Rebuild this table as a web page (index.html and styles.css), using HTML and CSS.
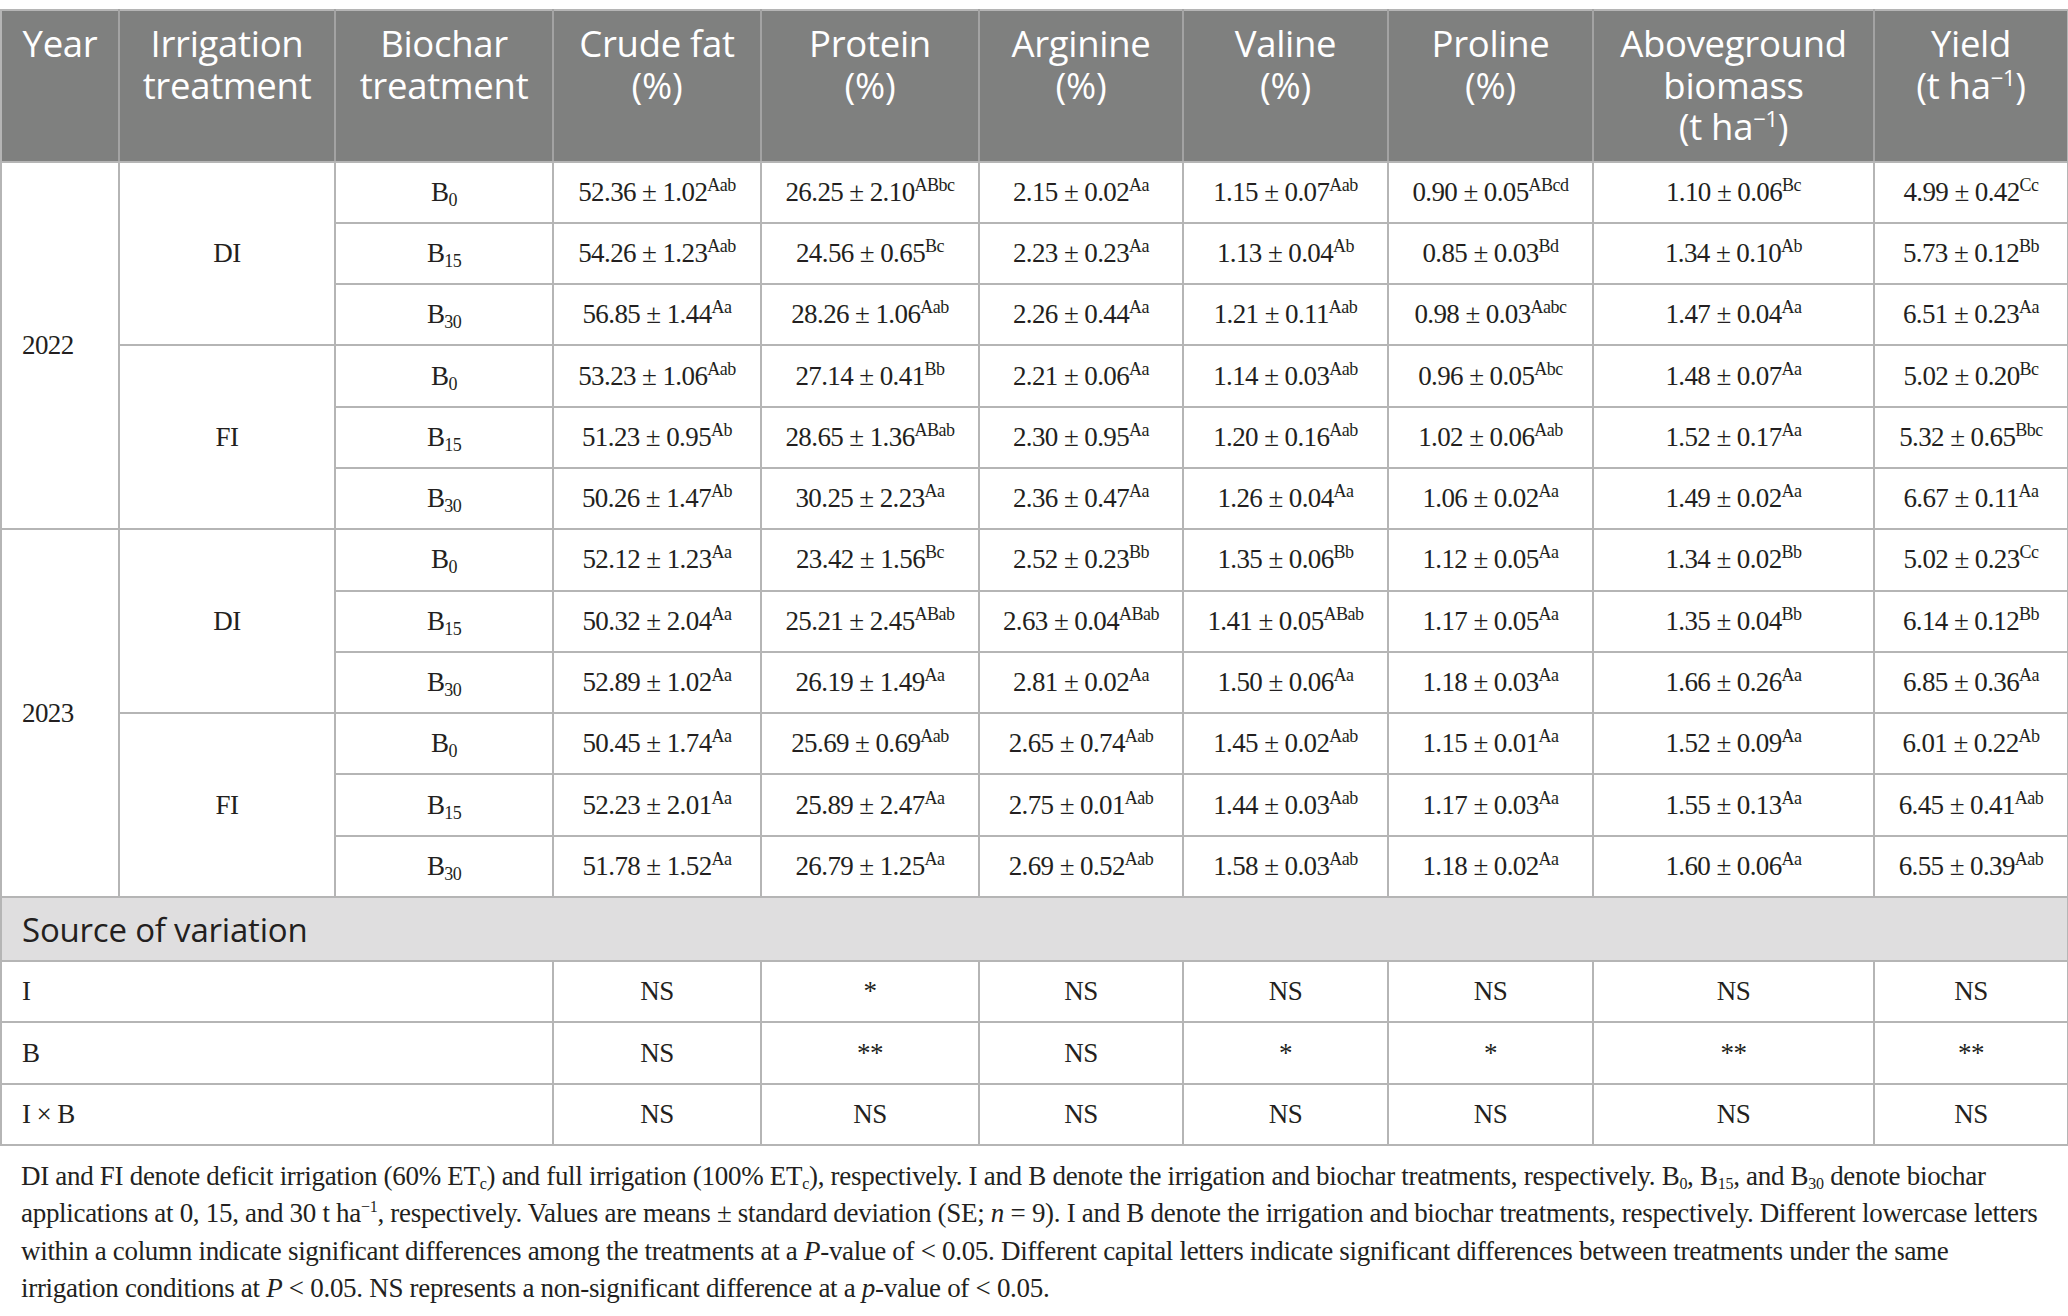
FILE: index.html
```html
<!DOCTYPE html>
<html lang="en">

<head>
    <meta charset="UTF-8" />
    <meta name="viewport" content="width=device-width, initial-scale=1.0" />
    <title>Biochar and irrigation table</title>
    <link rel="stylesheet" href="styles.css">
</head>

<body>
    <div class="page">
        <table class="data">
            <colgroup>
                <col class="c-year">
                <col class="c-irr">
                <col class="c-bio">
                <col class="c-fat">
                <col class="c-pro">
                <col class="c-arg">
                <col class="c-val">
                <col class="c-prl">
                <col class="c-abv">
                <col class="c-yld">
            </colgroup>
            <thead>
                <tr>
                    <th>Year</th>
                    <th>Irrigation<br>treatment</th>
                    <th>Biochar<br>treatment</th>
                    <th>Crude fat<br>(%)</th>
                    <th>Protein<br>(%)</th>
                    <th>Arginine<br>(%)</th>
                    <th>Valine<br>(%)</th>
                    <th>Proline<br>(%)</th>
                    <th>Aboveground<br>biomass<br>(t ha<sup>−1</sup>)</th>
                    <th>Yield<br>(t ha<sup>−1</sup>)</th>
                </tr>
            </thead>
            <tbody>
                <!-- 2022 -->
                <tr>
                    <td class="year" rowspan="6">2022</td>
                    <td rowspan="3">DI</td>
                    <td>B<sub>0</sub></td>
                    <td>52.36 ± 1.02<sup>Aab</sup></td>
                    <td>26.25 ± 2.10<sup>ABbc</sup></td>
                    <td>2.15 ± 0.02<sup>Aa</sup></td>
                    <td>1.15 ± 0.07<sup>Aab</sup></td>
                    <td>0.90 ± 0.05<sup>ABcd</sup></td>
                    <td>1.10 ± 0.06<sup>Bc</sup></td>
                    <td>4.99 ± 0.42<sup>Cc</sup></td>
                </tr>
                <tr>
                    <td>B<sub>15</sub></td>
                    <td>54.26 ± 1.23<sup>Aab</sup></td>
                    <td>24.56 ± 0.65<sup>Bc</sup></td>
                    <td>2.23 ± 0.23<sup>Aa</sup></td>
                    <td>1.13 ± 0.04<sup>Ab</sup></td>
                    <td>0.85 ± 0.03<sup>Bd</sup></td>
                    <td>1.34 ± 0.10<sup>Ab</sup></td>
                    <td>5.73 ± 0.12<sup>Bb</sup></td>
                </tr>
                <tr>
                    <td>B<sub>30</sub></td>
                    <td>56.85 ± 1.44<sup>Aa</sup></td>
                    <td>28.26 ± 1.06<sup>Aab</sup></td>
                    <td>2.26 ± 0.44<sup>Aa</sup></td>
                    <td>1.21 ± 0.11<sup>Aab</sup></td>
                    <td>0.98 ± 0.03<sup>Aabc</sup></td>
                    <td>1.47 ± 0.04<sup>Aa</sup></td>
                    <td>6.51 ± 0.23<sup>Aa</sup></td>
                </tr>
                <tr>
                    <td rowspan="3">FI</td>
                    <td>B<sub>0</sub></td>
                    <td>53.23 ± 1.06<sup>Aab</sup></td>
                    <td>27.14 ± 0.41<sup>Bb</sup></td>
                    <td>2.21 ± 0.06<sup>Aa</sup></td>
                    <td>1.14 ± 0.03<sup>Aab</sup></td>
                    <td>0.96 ± 0.05<sup>Abc</sup></td>
                    <td>1.48 ± 0.07<sup>Aa</sup></td>
                    <td>5.02 ± 0.20<sup>Bc</sup></td>
                </tr>
                <tr>
                    <td>B<sub>15</sub></td>
                    <td>51.23 ± 0.95<sup>Ab</sup></td>
                    <td>28.65 ± 1.36<sup>ABab</sup></td>
                    <td>2.30 ± 0.95<sup>Aa</sup></td>
                    <td>1.20 ± 0.16<sup>Aab</sup></td>
                    <td>1.02 ± 0.06<sup>Aab</sup></td>
                    <td>1.52 ± 0.17<sup>Aa</sup></td>
                    <td>5.32 ± 0.65<sup>Bbc</sup></td>
                </tr>
                <tr>
                    <td>B<sub>30</sub></td>
                    <td>50.26 ± 1.47<sup>Ab</sup></td>
                    <td>30.25 ± 2.23<sup>Aa</sup></td>
                    <td>2.36 ± 0.47<sup>Aa</sup></td>
                    <td>1.26 ± 0.04<sup>Aa</sup></td>
                    <td>1.06 ± 0.02<sup>Aa</sup></td>
                    <td>1.49 ± 0.02<sup>Aa</sup></td>
                    <td>6.67 ± 0.11<sup>Aa</sup></td>
                </tr>

                <!-- 2023 -->
                <tr>
                    <td class="year" rowspan="6">2023</td>
                    <td rowspan="3">DI</td>
                    <td>B<sub>0</sub></td>
                    <td>52.12 ± 1.23<sup>Aa</sup></td>
                    <td>23.42 ± 1.56<sup>Bc</sup></td>
                    <td>2.52 ± 0.23<sup>Bb</sup></td>
                    <td>1.35 ± 0.06<sup>Bb</sup></td>
                    <td>1.12 ± 0.05<sup>Aa</sup></td>
                    <td>1.34 ± 0.02<sup>Bb</sup></td>
                    <td>5.02 ± 0.23<sup>Cc</sup></td>
                </tr>
                <tr>
                    <td>B<sub>15</sub></td>
                    <td>50.32 ± 2.04<sup>Aa</sup></td>
                    <td>25.21 ± 2.45<sup>ABab</sup></td>
                    <td>2.63 ± 0.04<sup>ABab</sup></td>
                    <td>1.41 ± 0.05<sup>ABab</sup></td>
                    <td>1.17 ± 0.05<sup>Aa</sup></td>
                    <td>1.35 ± 0.04<sup>Bb</sup></td>
                    <td>6.14 ± 0.12<sup>Bb</sup></td>
                </tr>
                <tr>
                    <td>B<sub>30</sub></td>
                    <td>52.89 ± 1.02<sup>Aa</sup></td>
                    <td>26.19 ± 1.49<sup>Aa</sup></td>
                    <td>2.81 ± 0.02<sup>Aa</sup></td>
                    <td>1.50 ± 0.06<sup>Aa</sup></td>
                    <td>1.18 ± 0.03<sup>Aa</sup></td>
                    <td>1.66 ± 0.26<sup>Aa</sup></td>
                    <td>6.85 ± 0.36<sup>Aa</sup></td>
                </tr>
                <tr>
                    <td rowspan="3">FI</td>
                    <td>B<sub>0</sub></td>
                    <td>50.45 ± 1.74<sup>Aa</sup></td>
                    <td>25.69 ± 0.69<sup>Aab</sup></td>
                    <td>2.65 ± 0.74<sup>Aab</sup></td>
                    <td>1.45 ± 0.02<sup>Aab</sup></td>
                    <td>1.15 ± 0.01<sup>Aa</sup></td>
                    <td>1.52 ± 0.09<sup>Aa</sup></td>
                    <td>6.01 ± 0.22<sup>Ab</sup></td>
                </tr>
                <tr>
                    <td>B<sub>15</sub></td>
                    <td>52.23 ± 2.01<sup>Aa</sup></td>
                    <td>25.89 ± 2.47<sup>Aa</sup></td>
                    <td>2.75 ± 0.01<sup>Aab</sup></td>
                    <td>1.44 ± 0.03<sup>Aab</sup></td>
                    <td>1.17 ± 0.03<sup>Aa</sup></td>
                    <td>1.55 ± 0.13<sup>Aa</sup></td>
                    <td>6.45 ± 0.41<sup>Aab</sup></td>
                </tr>
                <tr>
                    <td>B<sub>30</sub></td>
                    <td>51.78 ± 1.52<sup>Aa</sup></td>
                    <td>26.79 ± 1.25<sup>Aa</sup></td>
                    <td>2.69 ± 0.52<sup>Aab</sup></td>
                    <td>1.58 ± 0.03<sup>Aab</sup></td>
                    <td>1.18 ± 0.02<sup>Aa</sup></td>
                    <td>1.60 ± 0.06<sup>Aa</sup></td>
                    <td>6.55 ± 0.39<sup>Aab</sup></td>
                </tr>

                <!-- Source of variation -->
                <tr class="section">
                    <td colspan="10">Source of variation</td>
                </tr>
                <tr>
                    <td class="factor" colspan="3">I</td>
                    <td>NS</td>
                    <td>*</td>
                    <td>NS</td>
                    <td>NS</td>
                    <td>NS</td>
                    <td>NS</td>
                    <td>NS</td>
                </tr>
                <tr>
                    <td class="factor" colspan="3">B</td>
                    <td>NS</td>
                    <td>**</td>
                    <td>NS</td>
                    <td>*</td>
                    <td>*</td>
                    <td>**</td>
                    <td>**</td>
                </tr>
                <tr>
                    <td class="factor" colspan="3">I × B</td>
                    <td>NS</td>
                    <td>NS</td>
                    <td>NS</td>
                    <td>NS</td>
                    <td>NS</td>
                    <td>NS</td>
                    <td>NS</td>
                </tr>
            </tbody>
        </table>

        <!-- Footnote -->
        <p class="note">DI and FI denote deficit irrigation (60% ET<sub>c</sub>) and full irrigation (100% ET<sub>c</sub>), respectively. I and B denote the irrigation and biochar treatments, respectively. B<sub>0</sub>, B<sub>15</sub>, and B<sub>30</sub> denote biochar applications at 0, 15, and 30 t ha<sup>−1</sup>, respectively. Values are means ± standard deviation (SE; <i>n</i> = 9). I and B denote the irrigation and biochar treatments, respectively. Different lowercase letters within a column indicate significant differences among the treatments at a <i>P</i>-value of &lt; 0.05. Different capital letters indicate significant differences between treatments under the same irrigation conditions at <i>P</i> &lt; 0.05. NS represents a non-significant difference at a <i>p</i>-value of &lt; 0.05.</p>
    </div>
</body>

</html>
```

FILE: styles.css
```css
* {
    margin: 0;
    padding: 0;
    box-sizing: border-box;
}

body {
    font-family: "Liberation Serif", "Times New Roman", serif;
    background: #fff;
    color: #231f20;
}

.page {
    width: 2068px;
    padding-top: 9px;
}

/* Table */
.data {
    width: 2067px;
    table-layout: fixed;
    border-collapse: collapse;
    border: 2px solid #b5b5b5;
}

.c-year { width: 118px; }
.c-irr { width: 216px; }
.c-bio { width: 218px; }
.c-fat { width: 208px; }
.c-pro { width: 218px; }
.c-arg { width: 204px; }
.c-val { width: 205px; }
.c-prl { width: 205px; }
.c-abv { width: 281px; }
.c-yld { width: 194px; }

.data th {
    background-color: #7f807f;
    color: #fff;
    font-family: "Open Sans", "Noto Sans", sans-serif;
    font-weight: normal;
    font-size: 36.5px;
    letter-spacing: -0.3px;
    line-height: 41.5px;
    padding: 12px 2px 13px;
    vertical-align: top;
    text-align: center;
    border-left: 2px solid #a3a3a3;
    border-bottom: 2px solid #b5b5b5;
}

.data th:first-child {
    border-left: none;
}

.data th sup {
    font-size: 22px;
    vertical-align: 13px;
    line-height: 0;
}

.data td {
    height: 61.3px;
    font-size: 27px;
    letter-spacing: -0.6px;
    text-align: center;
    vertical-align: middle;
    border: 2px solid #b5b5b5;
    white-space: nowrap;
}

.data td.year,
.data td.factor {
    text-align: left;
    padding-left: 20px;
}

.data tr.section td {
    height: 64px;
    background-color: #dfdedf;
    text-align: left;
    padding-left: 20px;
    font-family: "Open Sans", "Noto Sans", sans-serif;
    font-size: 33px;
    letter-spacing: -0.2px;
    color: #231f20;
}

.data td sup {
    font-size: 18px;
    letter-spacing: -0.5px;
    vertical-align: 10px;
    line-height: 0;
}

.data td sub {
    font-size: 18px;
    vertical-align: -5px;
    line-height: 0;
}

/* Footnote */
.note {
    margin-top: 12px;
    padding-left: 21px;
    padding-right: 18px;
    font-size: 27px;
    line-height: 37.5px;
    letter-spacing: -0.3px;
}

.note sub,
.note sup {
    font-size: 16px;
    line-height: 0;
}

.note sub {
    vertical-align: -4px;
}

.note sup {
    vertical-align: 10px;
}
```
